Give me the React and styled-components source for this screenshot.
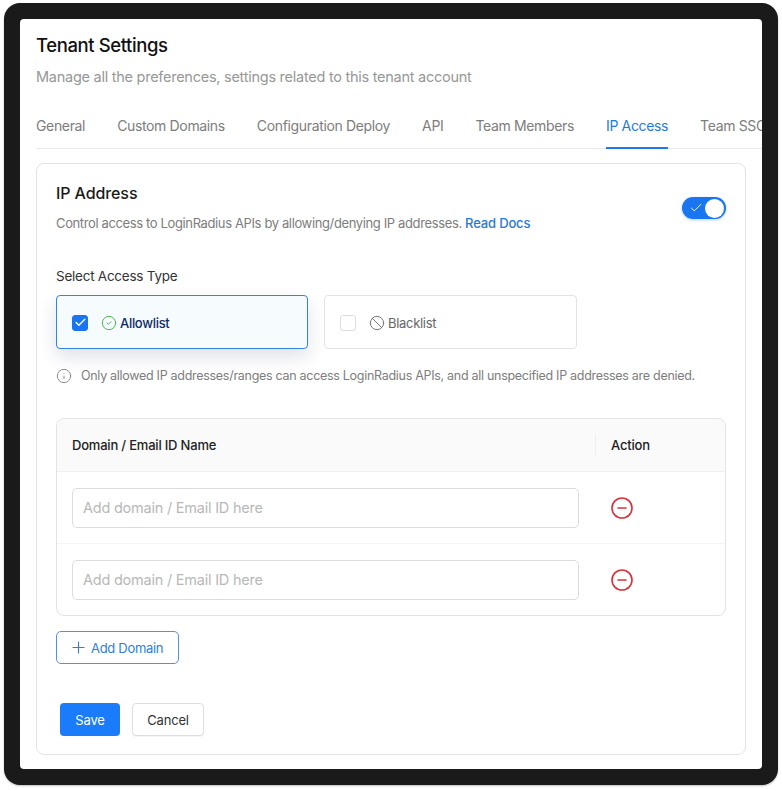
import React from "react";
import styled, { createGlobalStyle } from "styled-components";
import { Ban, Check, CircleCheck, CircleMinus, Info, Plus } from "lucide-react";

const tabs = [
  "General",
  "Custom Domains",
  "Configuration Deploy",
  "API",
  "Team Members",
  "IP Access",
  "Team SSO",
];

const GlobalStyle = createGlobalStyle`
  * {
    box-sizing: border-box;
  }
  body {
    margin: 0;
    background: #fff;
    font-family: Inter, "Liberation Sans", sans-serif;
  }
`;

const Page = styled.div`
  width: 782px;
  height: 790px;
  padding: 3px 4px 5px;
`;

const Frame = styled.div`
  height: 100%;
  padding: 16px;
  background: #1a1a1a;
  border-radius: 16px;
  box-shadow: 0 1px 2px rgba(0, 0, 0, 0.25);
`;

const Screen = styled.div`
  height: 100%;
  padding: 14px 0 14px 16px;
  background: #fff;
  border-radius: 4px;
  overflow: hidden;
  display: flex;
  flex-direction: column;
`;

const Title = styled.h1`
  margin: 0;
  font-size: 18.5px;
  line-height: 24px;
  font-weight: 500;
  letter-spacing: -0.4px;
  color: #111;
`;

const Subtitle = styled.p`
  margin: 9px 0 0;
  font-size: 14.5px;
  line-height: 22px;
  letter-spacing: -0.26px;
  color: #979797;
`;

const TabBar = styled.div`
  display: flex;
  gap: 32px;
  margin-top: 16px;
  height: 45px;
  border-bottom: 1px solid #e8e8e8;
  white-space: nowrap;
`;

const Tab = styled.div`
  height: 45px;
  padding-top: 12px;
  font-size: 14px;
  line-height: 20px;
  letter-spacing: -0.35px;
  color: ${(p) => (p.$active ? "#1f7ae0" : "#7d7d7d")};
  border-bottom: 2px solid ${(p) => (p.$active ? "#1f7ae0" : "transparent")};
`;

const Card = styled.section`
  flex: 1;
  width: 710px;
  margin-top: 14px;
  padding: 18px 19px 0;
  border: 1px solid #e3e3e3;
  border-radius: 8px;
`;

const CardHead = styled.div`
  display: flex;
  justify-content: space-between;
  align-items: flex-end;
`;

const CardTitle = styled.h2`
  margin: 0;
  font-size: 16px;
  line-height: 22px;
  font-weight: 500;
  letter-spacing: -0.1px;
  color: #1a1a1a;
`;

const Description = styled.p`
  margin: 9px 0 0;
  font-size: 13px;
  line-height: 20px;
  letter-spacing: -0.37px;
  color: #7d7d7d;
`;

const DocsLink = styled.a`
  color: #1f7ae0;
  font-weight: 500;
  letter-spacing: -0.15px;
`;

const Toggle = styled.div`
  width: 44px;
  height: 22px;
  margin-bottom: 14px;
  padding: 0 2px 0 7px;
  display: flex;
  align-items: center;
  justify-content: space-between;
  border-radius: 11px;
  background: #1a76f0;
  color: #fff;
  box-shadow: 0 1px 3px rgba(26, 118, 240, 0.35);
`;

const Knob = styled.span`
  width: 19px;
  height: 19px;
  border-radius: 50%;
  background: #fff;
`;

const FieldLabel = styled.div`
  margin-top: 33px;
  font-size: 13.5px;
  line-height: 20px;
  letter-spacing: -0.25px;
  color: #333;
`;

const Options = styled.div`
  display: flex;
  gap: 16px;
  margin-top: 9px;
`;

const Option = styled.div`
  width: ${(p) => (p.$selected ? "252px" : "253px")};
  height: 54px;
  padding: 1px 15px 0;
  display: flex;
  align-items: center;
  font-size: 13px;
  letter-spacing: -0.3px;
  font-weight: ${(p) => (p.$selected ? 500 : 400)};
  color: ${(p) => (p.$selected ? "#0f2a66" : "#666")};
  background: ${(p) => (p.$selected ? "#f6fbfe" : "#fff")};
  border: 1px solid ${(p) => (p.$selected ? "#2f84e4" : "#e3e3e3")};
  border-radius: 4px;
  box-shadow: ${(p) =>
    p.$selected ? "0 8px 18px rgba(30, 50, 90, 0.14)" : "none"};
`;

const Checkbox = styled.span`
  width: 16px;
  height: 16px;
  margin-right: 13px;
  display: flex;
  align-items: center;
  justify-content: center;
  color: #fff;
  background: ${(p) => (p.$checked ? "#1a76f0" : "#fff")};
  border: 1px solid ${(p) => (p.$checked ? "#1a76f0" : "#dedede")};
  border-radius: 3px;
`;

const OptionIcon = styled.span`
  display: flex;
  margin-right: 3px;
  color: ${(p) => p.$color};
`;

const Hint = styled.div`
  display: flex;
  align-items: center;
  gap: 9px;
  margin-top: 17px;
  font-size: 12.5px;
  line-height: 20px;
  letter-spacing: -0.29px;
  color: #7d7d7d;
`;

const Table = styled.div`
  margin-top: 32px;
  border: 1px solid #e3e3e3;
  border-radius: 8px;
  overflow: hidden;
`;

const TableHead = styled.div`
  display: flex;
  align-items: center;
  height: 53px;
  padding-bottom: 1px;
  background: #fafafa;
  border-bottom: 1px solid #f0f0f0;
  font-size: 13px;
  font-weight: 500;
  letter-spacing: -0.2px;
  color: #222;
`;

const NameHead = styled.div`
  width: 539px;
  padding-left: 15px;
  line-height: 22px;
  border-right: 1px solid #eee;
`;

const ActionHead = styled.div`
  padding-left: 15px;
  line-height: 22px;
`;

const Row = styled.div`
  display: flex;
  align-items: center;
  height: ${(p) => (p.$last ? "71px" : "72px")};
  padding-left: 15px;
  border-bottom: ${(p) => (p.$last ? "none" : "1px solid #f5f5f5")};
`;

const DomainInput = styled.input`
  width: 507px;
  height: 40px;
  padding: 0 10px;
  margin-right: 31px;
  font-family: inherit;
  font-size: 14.5px;
  letter-spacing: -0.22px;
  background: #fff;
  border: 1px solid #dcdcdc;
  border-radius: 5px;
  &::placeholder {
    color: #b8b8b8;
  }
`;

const RemoveButton = styled.span`
  display: flex;
  color: #dc2f3a;
`;

const AddButton = styled.button`
  display: flex;
  align-items: center;
  gap: 3px;
  width: 123px;
  height: 33px;
  margin-top: 15px;
  padding: 0 12px;
  font-family: inherit;
  font-size: 13px;
  letter-spacing: -0.3px;
  white-space: nowrap;
  color: #2a80e4;
  background: #fff;
  border: 1px solid #4a94e8;
  border-radius: 5px;
`;

const Actions = styled.div`
  display: flex;
  gap: 12px;
  margin: 39px 0 0 4px;
`;

const SaveButton = styled.button`
  width: 60px;
  height: 33px;
  font-family: inherit;
  font-size: 13px;
  letter-spacing: -0.2px;
  color: #fff;
  background: #1a7cfa;
  border: none;
  border-radius: 4px;
`;

const CancelButton = styled.button`
  width: 72px;
  height: 33px;
  font-family: inherit;
  font-size: 13px;
  letter-spacing: -0.2px;
  color: #333;
  background: #fff;
  border: 1px solid #dedede;
  border-radius: 4px;
  box-shadow: 0 1px 1px rgba(0, 0, 0, 0.05);
`;

const DomainRow = ({ last }) => (
  <Row $last={last}>
    <DomainInput placeholder="Add domain / Email ID here" />
    <RemoveButton>
      <CircleMinus size={24} strokeWidth={1.6} />
    </RemoveButton>
  </Row>
);

export default function App() {
  return (
    <Page>
      <GlobalStyle />
      <Frame>
        <Screen>
          <Title>Tenant Settings</Title>
          <Subtitle>
            Manage all the preferences, settings related to this tenant account
          </Subtitle>
          <TabBar>
            {tabs.map((tab) => (
              <Tab key={tab} $active={tab === "IP Access"}>
                {tab}
              </Tab>
            ))}
          </TabBar>
          <Card>
            <CardHead>
              <div>
                <CardTitle>IP Address</CardTitle>
                <Description>
                  Control access to LoginRadius APIs by allowing/denying IP
                  addresses. <DocsLink>Read Docs</DocsLink>
                </Description>
              </div>
              <Toggle>
                <Check size={14} strokeWidth={1.6} />
                <Knob />
              </Toggle>
            </CardHead>
            <FieldLabel>Select Access Type</FieldLabel>
            <Options>
              <Option $selected>
                <Checkbox $checked>
                  <Check size={13} strokeWidth={2.4} />
                </Checkbox>
                <OptionIcon $color="#4fb848">
                  <CircleCheck size={16} strokeWidth={1.5} />
                </OptionIcon>
                Allowlist
              </Option>
              <Option>
                <Checkbox />
                <OptionIcon $color="#777">
                  <Ban size={16} strokeWidth={1.5} />
                </OptionIcon>
                Blacklist
              </Option>
            </Options>
            <Hint>
              <Info size={16} strokeWidth={1.3} />
              Only allowed IP addresses/ranges can access LoginRadius APIs, and
              all unspecified IP addresses are denied.
            </Hint>
            <Table>
              <TableHead>
                <NameHead>Domain / Email ID Name</NameHead>
                <ActionHead>Action</ActionHead>
              </TableHead>
              <DomainRow />
              <DomainRow last />
            </Table>
            <AddButton>
              <Plus size={19} strokeWidth={1.4} />
              Add Domain
            </AddButton>
            <Actions>
              <SaveButton>Save</SaveButton>
              <CancelButton>Cancel</CancelButton>
            </Actions>
          </Card>
        </Screen>
      </Frame>
    </Page>
  );
}
